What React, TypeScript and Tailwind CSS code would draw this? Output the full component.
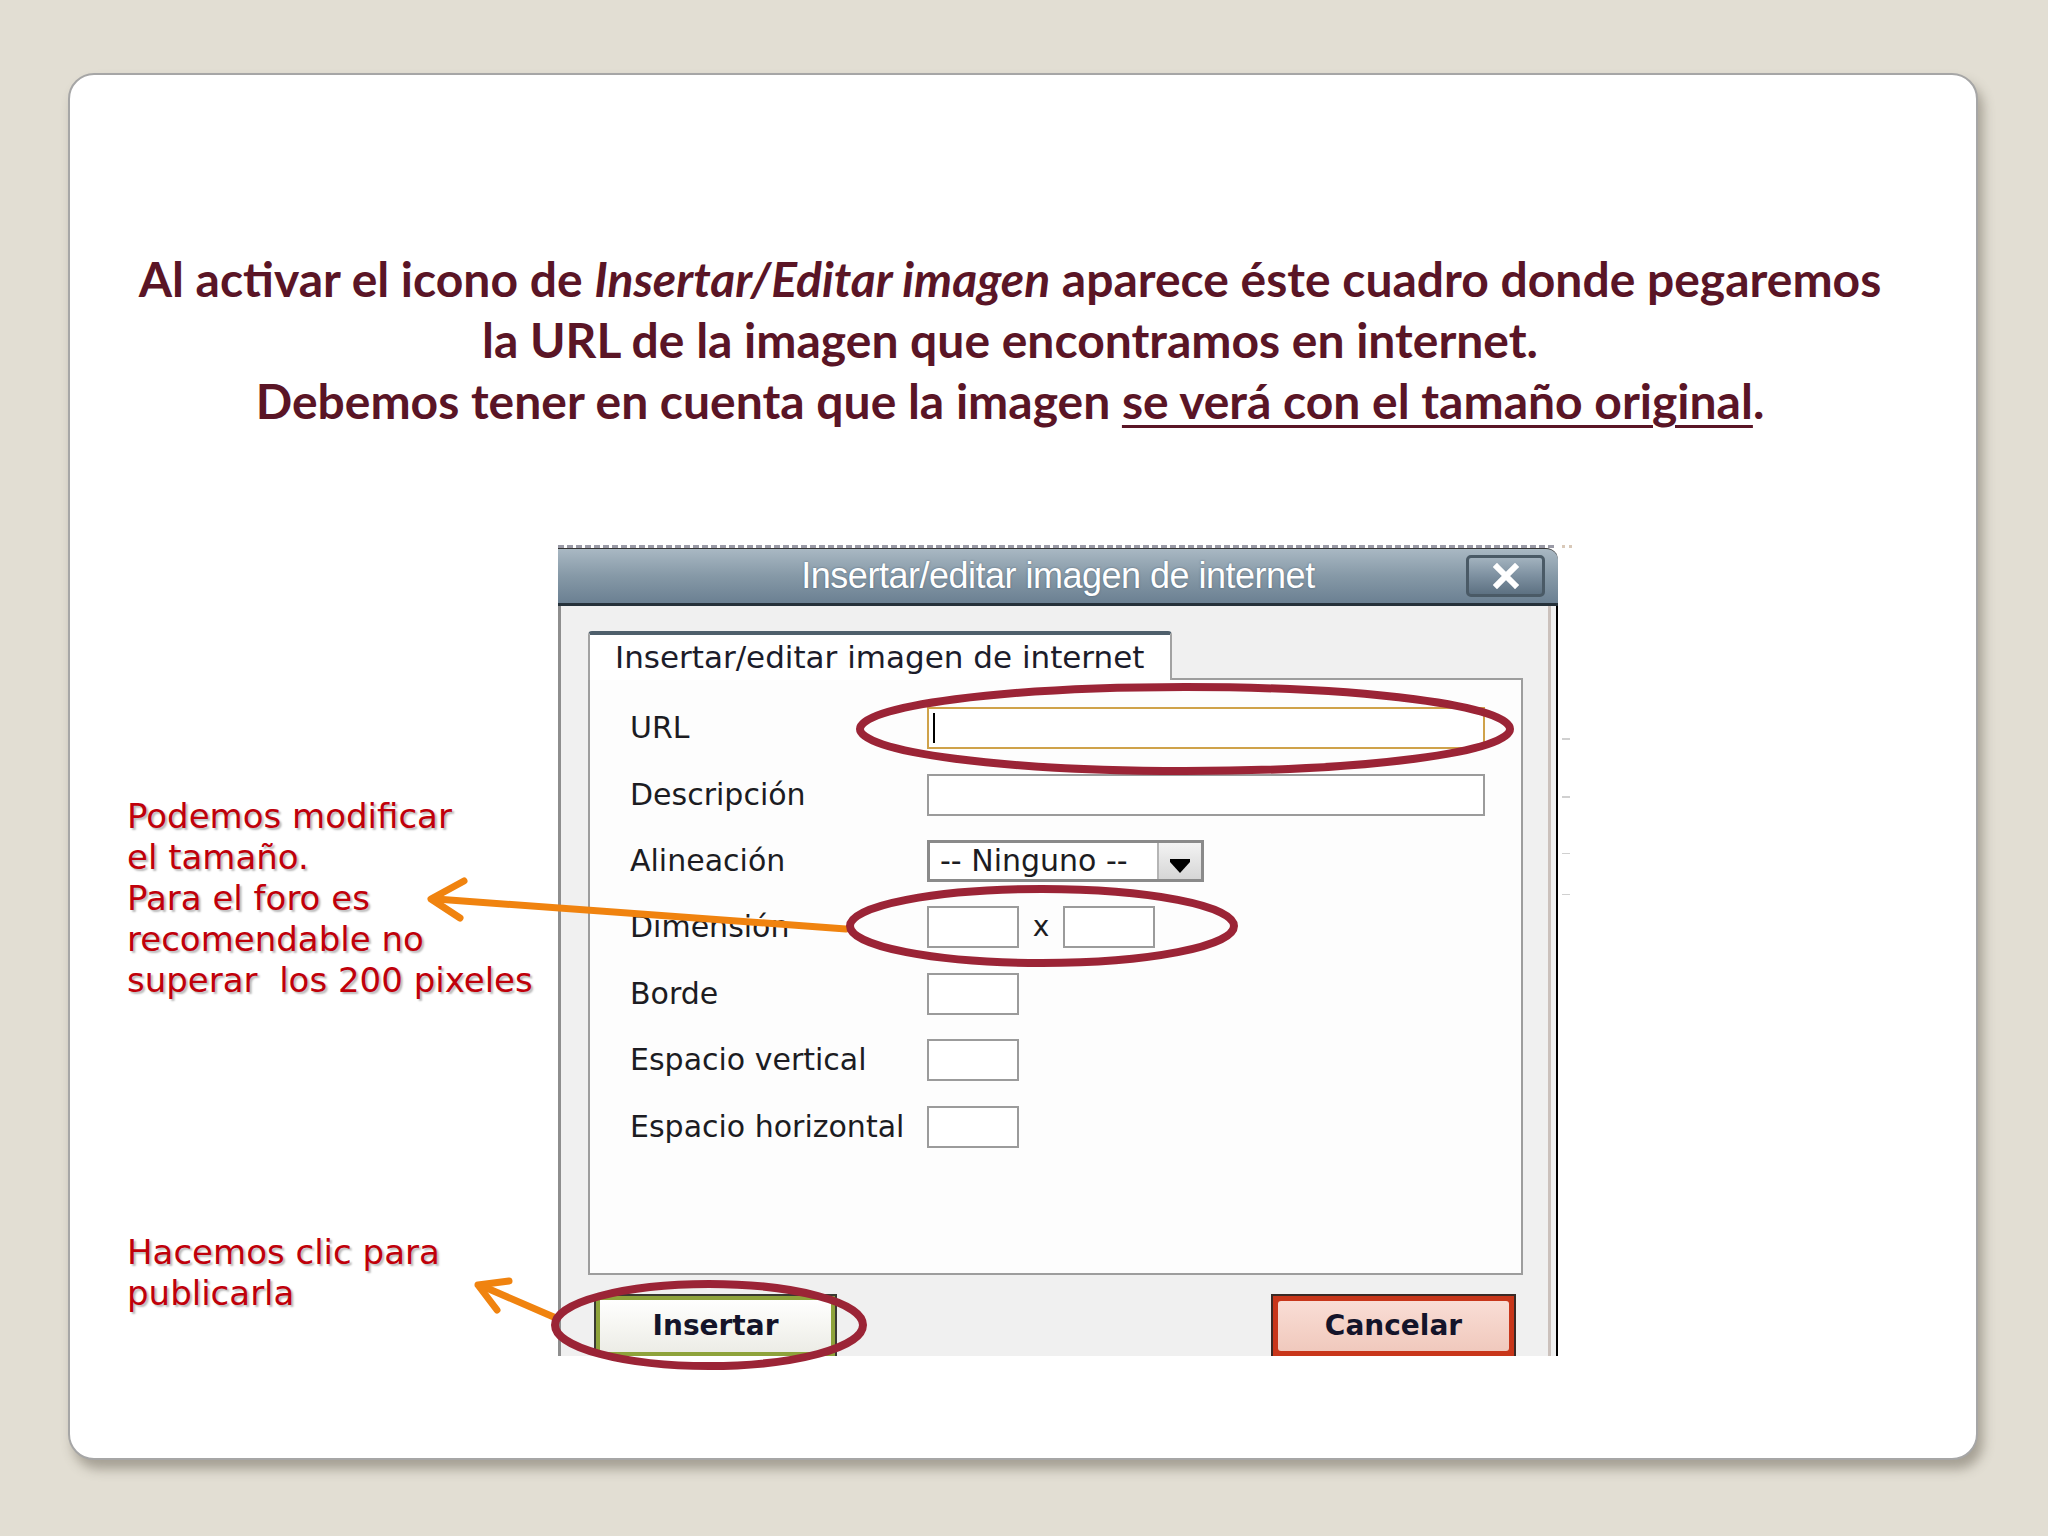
import React from "react";

const dlgFont = { fontFamily: '"DejaVu Sans", Verdana, sans-serif' };

const labels = [
  "URL",
  "Descripción",
  "Alineación",
  "Dimensión",
  "Borde",
  "Espacio vertical",
  "Espacio horizontal",
];

function SmallInput() {
  return <div className="w-[92px] h-[42px] border-2 border-[#9b9b9b] bg-white" />;
}

function FieldRow({ label, children }: { label: string; children?: React.ReactNode }) {
  return (
    <div className="flex items-center h-[66.4px]">
      <div className="w-[297px] text-[30px] text-[#1c1c22] leading-none">{label}</div>
      {children}
    </div>
  );
}

function Dialog() {
  return (
    <div className="w-[1000px] h-[811px] overflow-hidden flex flex-col" style={dlgFont}>
      <div className="h-[4px] border-t-[3px] border-dashed border-[#9a9aa6] mr-[4px]" />

      {/* title bar */}
      <div className="h-[62px] grid grid-cols-[1fr_auto_1fr] items-center rounded-tr-[12px] border-b-[3px] border-[#25313a] border-t border-t-[#333] bg-gradient-to-b from-[#a9b8c3] via-[#8699a7] to-[#6b8092]">
        <div />
        <div
          className="text-white text-[36px] tracking-[-0.5px] [text-shadow:0_0_2px_rgba(40,60,80,0.6)]"
          style={{ fontFamily: '"Liberation Sans", Arial, sans-serif' }}
        >
          Insertar/editar imagen de internet
        </div>
        <div className="flex justify-end pr-[13px]">
          <div className="w-[79px] h-[42px] rounded-[5px] border-[3px] border-[#4a5a66] bg-gradient-to-b from-[#a2b2be] via-[#7d90a0] to-[#5d7182] flex items-center justify-center">
            <svg width="26" height="26" viewBox="0 0 26 26">
              <path d="M4 4 L22 22 M22 4 L4 22" stroke="#fff" strokeWidth="6" strokeLinecap="square" />
            </svg>
          </div>
        </div>
      </div>

      {/* body */}
      <div className="flex-1 bg-[#f0f0f0] border-l-[3px] border-[#8e8e8e] border-r-2 border-r-black flex">
        <div className="flex-1 border-r-[3px] border-[#cbc1bc] mr-[5px] pl-[27px] pt-[25px] flex flex-col">
          <div className="relative z-10 -mb-[2px] w-[584px] h-[49px] bg-white border-t-[4px] border-t-[#4e5f6b] border-l-2 border-r-2 border-[#a2a2a2] rounded-t-[4px] pl-[25px] flex items-center text-[31px] text-[#1c1c2a]">
            Insertar/editar imagen de internet
          </div>
          <div className="w-[935px] h-[597px] border-2 border-[#9d9d9d] bg-[#fdfdfd] pl-[40px] pt-[15px] flex flex-col">
            <FieldRow label={labels[0]}>
              <div className="w-[558px] h-[42px] border-2 border-[#cfa24a] bg-white flex items-center pl-[4px]">
                <div className="w-[2px] h-[30px] bg-black" />
              </div>
            </FieldRow>
            <FieldRow label={labels[1]}>
              <div className="w-[558px] h-[42px] border-2 border-[#9b9b9b] bg-white" />
            </FieldRow>
            <FieldRow label={labels[2]}>
              <div className="w-[277px] h-[42px] border-[3px] border-[#8a8a8a] bg-white flex">
                <div className="flex-1 flex items-center pl-[10px] text-[30px] text-[#1c1c22] leading-none">-- Ninguno --</div>
                <div className="w-[44px] bg-gradient-to-b from-[#f3f3f3] to-[#d6d6d6] border-l-2 border-[#b5b5b5] flex items-end justify-center pb-[6px]">
                  <svg width="20" height="14" viewBox="0 0 20 14">
                    <rect x="0" y="0" width="20" height="3" fill="#000" />
                    <polygon points="0,3 20,3 10,14" fill="#000" />
                  </svg>
                </div>
              </div>
            </FieldRow>
            <FieldRow label={labels[3]}>
              <SmallInput />
              <div className="w-[44px] text-center text-[28px] text-[#1c1c22] leading-none">x</div>
              <SmallInput />
            </FieldRow>
            <FieldRow label={labels[4]}>
              <SmallInput />
            </FieldRow>
            <FieldRow label={labels[5]}>
              <SmallInput />
            </FieldRow>
            <FieldRow label={labels[6]}>
              <SmallInput />
            </FieldRow>
          </div>

          {/* buttons */}
          <div className="mt-[19px] w-[935px] flex justify-between pl-[6px] pr-[7px]">
            <div className="w-[243px] h-[64px] border-2 border-[#3a3a32] bg-[#8ea33b] p-[4px]">
              <div className="h-full bg-gradient-to-b from-white via-[#f6f6f2] to-[#ecece6] flex items-center justify-center text-[28px] font-bold text-[#14142a]">
                Insertar
              </div>
            </div>
            <div className="w-[245px] h-[64px] border-2 border-[#3a2a26] bg-[#c8361a] p-[5px]">
              <div className="h-full rounded-[3px] bg-gradient-to-b from-[#f9ddd5] to-[#f0c9bd] flex items-center justify-center text-[28px] font-bold text-[#14142a]">
                Cancelar
              </div>
            </div>
          </div>
        </div>
      </div>
    </div>
  );
}

export default function App() {
  const note = "text-[#c0000a] text-[34px] leading-[41px] whitespace-pre [text-shadow:2px_2px_2px_rgba(0,0,0,0.28)]";
  return (
    <div className="relative w-[2048px] h-[1536px] bg-[#e2ded3] pt-[73px] pl-[68px] overflow-hidden">
      <div className="w-[1910px] h-[1387px] bg-white border-2 border-[#a6a6a6] rounded-[26px] shadow-[5px_9px_12px_rgba(90,85,70,0.45)] flex flex-col">
        <div
          className="pt-[173px] pr-[26px] text-center text-[#5a1526] font-bold text-[48px] leading-[61px]"
          style={{ fontFamily: 'Lato, "Open Sans", sans-serif' }}
        >
          <div>
            Al activar el icono de <i>Insertar/Editar imagen</i> aparece éste cuadro donde pegaremos
          </div>
          <div>la URL de la imagen que encontramos en internet.</div>
          <div>
            Debemos tener en cuenta que la imagen <span className="underline underline-offset-[6px] decoration-[3px]">se verá con el tamaño original</span>.
          </div>
        </div>

        <div className="mt-[114px] flex">
          <div className="w-[488px] pl-[57px] pt-[251px] flex flex-col" style={dlgFont}>
            <div className={note}>
              {"Podemos modificar\nel tamaño.\nPara el foro es\nrecomendable no\nsuperar  los 200 pixeles"}
            </div>
            <div className={note + " mt-[231px]"}>{"Hacemos clic para\npublicarla"}</div>
          </div>
          <Dialog />
          <div className="w-[14px] pl-[4px] flex flex-col">
            <div className="h-[3px] w-[10px] border-t-[3px] border-dotted border-[#d9c9b9]" />
            <div className="mt-[190px] h-[60px] w-[8px] border-t-2 border-b-2 border-[#d0d0d0]" />
            <div className="mt-[55px] h-[1px] w-[8px] bg-[#d0d0d0]" />
            <div className="mt-[40px] h-[1px] w-[8px] bg-[#d0d0d0]" />
          </div>
        </div>
      </div>

      {/* annotation overlay */}
      <svg className="absolute left-0 top-0 pointer-events-none" width="2048" height="1536" viewBox="0 0 2048 1536">
        <g fill="none" stroke="#f0830f" strokeWidth="7" strokeLinecap="round" strokeLinejoin="round">
          <line x1="846" y1="929" x2="436" y2="899" />
          <polyline points="464,881 431,899 460,918" />
          <line x1="556" y1="1318" x2="482" y2="1286" />
          <polyline points="509,1281 478,1285 497,1310" />
        </g>
        <g fill="none" stroke="#9b2436" strokeWidth="8">
          <ellipse cx="1185" cy="729" rx="325" ry="42" />
          <ellipse cx="1042" cy="926" rx="192" ry="37" />
          <ellipse cx="709" cy="1325" rx="154" ry="41" />
        </g>
      </svg>
    </div>
  );
}
